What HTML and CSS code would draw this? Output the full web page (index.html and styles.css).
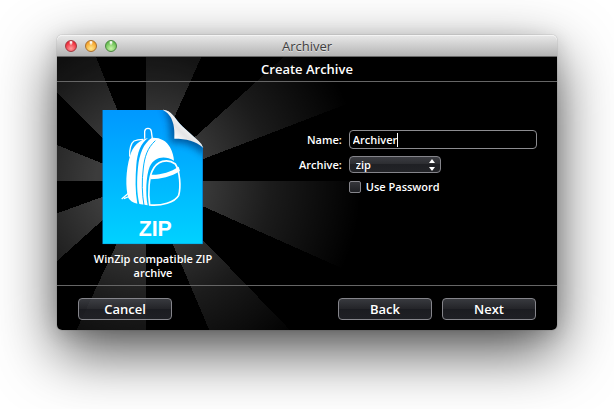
FILE: index.html
```html
<!DOCTYPE html>
<html lang="en">
<head>
<meta charset="utf-8">
<title>Archiver</title>
<link rel="stylesheet" href="styles.css">
</head>
<body>
<main class="window">
  <header class="titlebar">
    <div class="lights">
      <button class="light light-close" type="button" aria-label="Close"></button>
      <button class="light light-minimize" type="button" aria-label="Minimize"></button>
      <button class="light light-zoom" type="button" aria-label="Zoom"></button>
    </div>
    <div class="title">Archiver</div>
  </header>
  <form class="content">
    <h1 class="heading">Create Archive</h1>
    <div class="panel">
      <figure class="format">
        <svg class="document" viewBox="17 24 318 420" aria-hidden="true">
          <defs>
            <linearGradient id="sheet" x1="0" y1="0" x2="0" y2="1">
              <stop offset="0" stop-color="#0098ff"/>
              <stop offset="1" stop-color="#00d2ff"/>
            </linearGradient>
            <linearGradient id="curl" x1="240" y1="116" x2="280" y2="74" gradientUnits="userSpaceOnUse">
              <stop offset="0" stop-color="#fff"/>
              <stop offset="0.5" stop-color="#e4e4e6"/>
              <stop offset="1" stop-color="#fafafa"/>
            </linearGradient>
            <filter id="soft" x="-50%" y="-50%" width="200%" height="200%">
              <feGaussianBlur stdDeviation="11"/>
            </filter>
            <clipPath id="page">
              <path d="M24 30H205C230 30 240 54 264 79L312 124Q322 132 326 142V433H24Z"/>
            </clipPath>
          </defs>
          <g clip-path="url(#page)">
            <path fill="url(#sheet)" d="M24 30H326V433H24Z"/>
            <path filter="url(#soft)" fill="#003a78" opacity=".7" d="M206 24C228 50 226 90 230 128C270 124 300 136 334 170V24Z"/>
            <path fill="none" stroke="#0a6fc0" stroke-width="4" d="M24 30V433H326V142"/>
          </g>
          <path fill="url(#curl)" d="M205 29C230 28 242 56 264 79L312 122Q324 132 327 144C304 122 276 116 240 116C242 84 238 46 205 29Z"/>
          <g fill="#fff" transform="translate(69 72)">
            <path fill="none" stroke="#fff" stroke-width="4" d="M82 44V22Q83 13 92 13Q101 13 102 22L105 44"/>
            <path d="M92 42C66 48 46 66 38 96C25 140 24 190 33 222C38 230 46 236 60 239C53 200 54 160 57 122C60 86 70 58 92 42Z"/>
            <path d="M104 41C128 40 148 50 158 70C166 84 169 98 170 110C142 94 112 98 97 128C86 156 84 208 91 244L66 240C58 208 58 170 62 130C66 90 78 58 104 41Z"/>
            <path fill="none" stroke="#03b4ff" stroke-width="3" d="M114 50C90 72 82 98 78 132C73 170 74 212 80 244"/>
            <path fill="none" stroke="#fff" stroke-width="5" d="M97 243C91 204 96 160 104 142C118 110 150 102 174 120C188 142 191 190 184 214C172 236 132 246 97 243Z"/>
            <path d="M101 152C130 153 160 144 184 128L188 141C162 158 130 165 99 166Z"/>
            <path fill="none" stroke="#fff" stroke-width="4" d="M13 225L34 207M20 224L38 216M37 98C35 76 42 56 50 51Q60 46 78 46"/>
          </g>
          <text class="document-type" x="133" y="407">ZIP</text>
        </svg>
        <figcaption class="caption">WinZip compatible ZIP archive</figcaption>
      </figure>
      <div class="fields">
        <label class="label" for="name">Name:</label>
        <input class="text-box" id="name" type="text" value="Archiver">
        <label class="label" for="archive">Archive:</label>
        <div class="popup">
          <select class="popup-select" id="archive"><option>zip</option></select>
          <svg class="popup-arrows" viewBox="0 0 6 12" aria-hidden="true"><path d="M3 0L6 4H0ZM3 12L0 8H6Z"/></svg>
        </div>
        <div class="check-row">
          <input class="check" id="password" type="checkbox">
          <label for="password">Use Password</label>
        </div>
      </div>
    </div>
    <footer class="actions">
      <button class="button" type="button">Cancel</button>
      <div class="action-group">
        <button class="button" type="button">Back</button>
        <button class="button" type="submit">Next</button>
      </div>
    </footer>
  </form>
</main>
</body>
</html>
```
FILE: styles.css
```css
* {
  box-sizing: border-box;
}

body {
  min-height: 100vh;
  margin: 0;
  padding: 35px 57px;
  background: #fff;
  color: #fff;
  font: 600 11px/14px "Open Sans", "Noto Sans", sans-serif;
}

input,
select,
button {
  margin: 0;
  color: inherit;
  font: inherit;
}

.window {
  border-radius: 5px;
  box-shadow:
    0 0 1px rgba(0, 0, 0, 0.6),
    0 4px 20px rgba(0, 0, 0, 0.14),
    0 22px 60px rgba(0, 0, 0, 0.68);
}

.titlebar {
  display: grid;
  grid-template-columns: 1fr auto 1fr;
  align-items: center;
  height: 22px;
  padding: 0 8px;
  border-bottom: 1px solid #686868;
  border-radius: 5px 5px 0 0;
  background: linear-gradient(#e9e9e9, #b4b4b4);
  box-shadow: inset 0 1px #f4f4f4;
}

.title {
  color: #404040;
  font-size: 13px;
  font-weight: 400;
  line-height: 20px;
  text-shadow: 0 1px rgba(255, 255, 255, 0.5);
}

.lights {
  display: flex;
  gap: 8px;
}

.light {
  width: 12px;
  height: 12px;
  padding: 0;
  border: 1px solid;
  border-radius: 50%;
}

.light-close {
  border-color: #a03a40;
  background: radial-gradient(ellipse at 50% 12%, #fff 0 6%, transparent 28%), radial-gradient(circle at 50% 75%, #ff9c9c, #ee2434 75%);
}

.light-minimize {
  border-color: #a8702f;
  background: radial-gradient(ellipse at 50% 12%, #fff 0 6%, transparent 28%), radial-gradient(circle at 50% 75%, #ffe78c, #f5a026 75%);
}

.light-zoom {
  border-color: #4b8640;
  background: radial-gradient(ellipse at 50% 12%, #fff 0 6%, transparent 28%), radial-gradient(circle at 50% 75%, #c8f5a8, #62bb4c 75%);
}

.content {
  border-radius: 0 0 5px 5px;
  background:
    radial-gradient(circle at 89px 124px, transparent 50px, rgba(0, 0, 0, 0.55) 125px, #000 215px),
    conic-gradient(from 0deg at 89px 124px,
      #3c3c3c 0 24deg, #000 24deg 48deg,
      #3c3c3c 48deg 69deg, #000 69deg 90deg,
      #3c3c3c 90deg 114deg, #000 114deg 136deg,
      #3c3c3c 136deg 157deg, #000 157deg 180deg,
      #3c3c3c 180deg 205deg, #000 205deg 228deg,
      #3c3c3c 228deg 250deg, #000 250deg 270deg,
      #3c3c3c 270deg 292deg, #000 292deg 315deg,
      #3c3c3c 315deg 338deg, #000 338deg);
}

.heading {
  margin: 0;
  padding: 2px 0;
  border-bottom: 1px solid #666;
  background: rgba(0, 0, 0, 0.2);
  font-size: 13px;
  font-weight: 600;
  line-height: 20px;
  text-align: center;
}

.panel {
  display: flex;
  align-items: flex-start;
  gap: 74px;
  padding: 26px 20px 5px 24px;
}

.format {
  display: flex;
  flex: none;
  flex-direction: column;
  align-items: center;
  width: 144px;
  margin: 0;
}

.document {
  width: 106px;
  height: 140px;
}

.document-type {
  fill: #fff;
  font: 700 64px "Liberation Sans", sans-serif;
}

.caption {
  width: 140px;
  padding-top: 4px;
  text-align: center;
}

.fields {
  display: grid;
  flex: 1;
  grid-template-columns: auto 1fr;
  align-items: center;
  gap: 7px;
  padding-top: 22px;
}

.label {
  text-align: right;
}

.text-box {
  width: 100%;
  height: 19px;
  padding: 0 3px;
  border: 1px solid #8c8c90;
  border-radius: 4px;
  outline: 0;
  background: linear-gradient(#fff, #fff) 47px 2px / 1px 14px no-repeat #000;
}

.popup {
  position: relative;
  width: 92px;
}

.popup-select {
  display: block;
  width: 100%;
  height: 17px;
  padding: 0 6px;
  border: 1px solid #85858b;
  border-radius: 4px;
  appearance: none;
  background: linear-gradient(#3b3c41, #2b2c30 50%, #1f2024 50%, #222327);
}

.popup-arrows {
  position: absolute;
  top: 3px;
  right: 6px;
  width: 6px;
  height: 12px;
  fill: #fff;
  pointer-events: none;
}

.check-row {
  display: flex;
  grid-column: 2;
  align-items: center;
  gap: 5px;
}

.check {
  width: 12px;
  height: 12px;
  border: 1px solid #85858b;
  border-radius: 2px;
  appearance: none;
  background: linear-gradient(#35363b, #1f2024);
}

.actions {
  display: flex;
  justify-content: space-between;
  padding: 12px 21px 10px;
  border-top: 1px solid #666;
}

.action-group {
  display: flex;
  gap: 10px;
}

.button {
  width: 94px;
  height: 22px;
  padding: 0;
  border: 1px solid #85858b;
  border-radius: 4px;
  background: linear-gradient(rgba(70, 72, 78, 0.8), rgba(44, 45, 50, 0.8) 50%, rgba(30, 31, 36, 0.9) 50%, rgba(34, 35, 40, 0.9));
  font-size: 13px;
  line-height: 18px;
}
```
